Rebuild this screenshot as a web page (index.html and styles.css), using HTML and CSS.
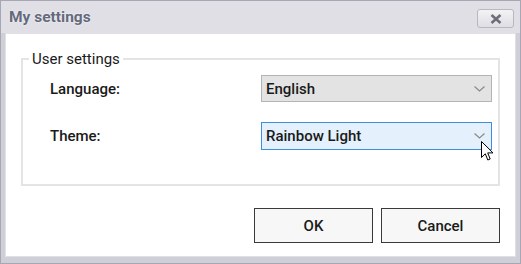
FILE: index.html
```html
<!DOCTYPE html>
<html>
<head>
<meta charset="utf-8">
<link rel="stylesheet" href="styles.css">
</head>
<body>
<div class="window">
  <div class="titlebar">
    <span class="title">My settings</span>
    <button class="close" aria-label="Close">
      <svg width="12" height="10" viewBox="0 0 12 10"><path d="M1.5 1 L10.5 9 M10.5 1 L1.5 9" stroke="#6d6e7a" stroke-width="2.6" stroke-linecap="butt"/></svg>
    </button>
  </div>
  <div class="content">
    <fieldset class="group">
      <legend class="legend">User settings</legend>
      <div class="rows">
        <label class="label">Language:</label>
        <div class="select">
          <span>English</span>
          <svg class="chev" width="11" height="6" viewBox="0 0 11 6"><path d="M0.5 0.5 L5.5 5 L10.5 0.5" fill="none" stroke="#8a8a8a" stroke-width="1.2"/></svg>
        </div>
        <label class="label">Theme:</label>
        <div class="select active">
          <span>Rainbow Light</span>
          <svg class="chev" width="11" height="6" viewBox="0 0 11 6"><path d="M0.5 0.5 L5.5 5 L10.5 0.5" fill="none" stroke="#8a8a8a" stroke-width="1.2"/></svg>
        </div>
      </div>
    </fieldset>
    <div class="actions">
      <button class="btn">OK</button>
      <button class="btn">Cancel</button>
    </div>
  </div>
  <svg class="cursor" width="14" height="21" viewBox="0 0 14 21"><path d="M0.5 0.5 L0.5 16.5 L4.3 12.8 L6.8 19 L9.2 18 L6.7 11.9 L12 11.9 Z" fill="#fff" stroke="#000" stroke-width="1" stroke-linejoin="miter"/></svg>
</div>
</body>
</html>
```
FILE: styles.css
```css
html, body {
  margin: 0;
  padding: 0;
  background: #fff;
}
.window {
  position: relative;
  width: 521px;
  height: 264px;
  box-sizing: border-box;
  border: 1px solid #a6a6b4;
  background: #cfcfd7;
  padding: 0 4px 6px 4px;
  display: flex;
  flex-direction: column;
  font-family: Roboto, "Liberation Sans", sans-serif;
}
.titlebar {
  height: 32px;
  flex: none;
  display: flex;
  align-items: center;
  justify-content: space-between;
  background: #dfdfe5;
  margin: 0 -4px;
  padding: 0 6px 0 8px;
}
.title {
  font-size: 15.5px;
  font-weight: 700;
  color: #646a7c;
  text-shadow: 0 0 2px #ffffff;
  margin-top: -1px;
}
.close {
  width: 37px;
  height: 19px;
  margin-top: 3px;
  box-sizing: border-box;
  border: 1px solid #b8b8c2;
  border-radius: 3px;
  background: linear-gradient(#f3f3f5, #dedee4);
  display: flex;
  align-items: center;
  justify-content: center;
  padding: 0;
}
.content {
  flex: 1;
  background: #fff;
  border: 1px solid #e0e0e6;
  padding: 17px 15px 0 15px;
  display: flex;
  flex-direction: column;
}
.group {
  margin: 0;
  padding: 0;
  border: 2px solid #e4e4e4;
  height: 135px;
  box-sizing: border-box;
}
.legend {
  margin-left: 6px;
  padding: 0 3px;
  font-size: 15px;
  line-height: 16px;
  color: #1a1a1a;
}
.rows {
  display: grid;
  grid-template-columns: 211px 231px;
  row-gap: 20px;
  padding: 8px 0 0 27px;
  align-items: center;
}
.label {
  font-size: 15px;
  font-weight: 500;
  color: #1a1a1a;
}
.select {
  height: 27px;
  box-sizing: border-box;
  border: 1px solid #b4b4b4;
  background: #e3e3e3;
  display: flex;
  align-items: center;
  justify-content: space-between;
  padding: 0 5px 0 4px;
  font-size: 15px;
  font-weight: 500;
  color: #1a1a1a;
}
.select.active {
  height: 28px;
  border-color: #3d8ee0;
  background: #e4f0fb;
}
.chev {
  margin-right: 1px;
}
.actions {
  display: flex;
  justify-content: flex-end;
  gap: 8px;
  margin-top: 22px;
}
.btn {
  width: 119px;
  height: 35px;
  box-sizing: border-box;
  border: 1px solid #3a3a3a;
  background: #f7f7f7;
  font-family: Roboto, "Liberation Sans", sans-serif;
  font-size: 15px;
  font-weight: 500;
  color: #1a1a1a;
  padding: 0;
}
.cursor {
  position: absolute;
  left: 480px;
  top: 140px;
}
```
